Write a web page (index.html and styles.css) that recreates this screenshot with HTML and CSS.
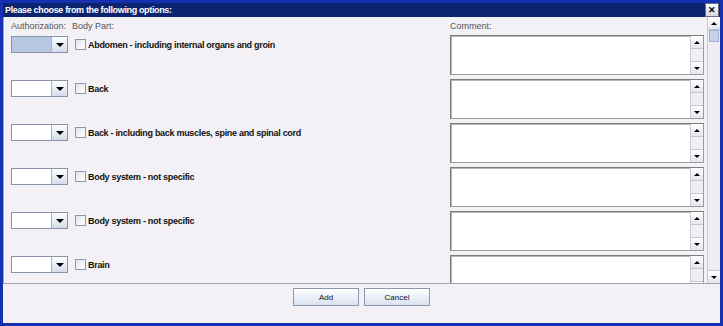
FILE: index.html
```html
<!DOCTYPE html>
<html lang="en">

<head>
    <meta charset="UTF-8">
    <title>Body Part Options</title>
    <link rel="stylesheet" href="styles.css">
</head>

<body>
    <div class="window">
        <div class="titlebar">
            <span class="title">Please choose from the following options:</span>
            <span class="close">&#10005;</span>
        </div>

        <div class="pane">
            <div class="viewport">
                <div class="header-row">
                    <span>Authorization:</span>
                    <span class="head-part">Body Part:</span>
                    <span>Comment:</span>
                </div>

                <div class="row">
                    <div class="combo selected"><span class="field"></span><span class="drop"></span></div>
                    <label class="part"><span class="check"></span>Abdomen - including internal organs and groin</label>
                    <div class="comment"><div class="text"></div><div class="tscroll"><span class="btn up"></span><span class="track"></span><span class="btn down"></span></div></div>
                </div>

                <div class="row">
                    <div class="combo"><span class="field"></span><span class="drop"></span></div>
                    <label class="part"><span class="check"></span>Back</label>
                    <div class="comment"><div class="text"></div><div class="tscroll"><span class="btn up"></span><span class="track"></span><span class="btn down"></span></div></div>
                </div>

                <div class="row">
                    <div class="combo"><span class="field"></span><span class="drop"></span></div>
                    <label class="part"><span class="check"></span>Back - including back muscles, spine and spinal cord</label>
                    <div class="comment"><div class="text"></div><div class="tscroll"><span class="btn up"></span><span class="track"></span><span class="btn down"></span></div></div>
                </div>

                <div class="row">
                    <div class="combo"><span class="field"></span><span class="drop"></span></div>
                    <label class="part"><span class="check"></span>Body system - not specific</label>
                    <div class="comment"><div class="text"></div><div class="tscroll"><span class="btn up"></span><span class="track"></span><span class="btn down"></span></div></div>
                </div>

                <div class="row">
                    <div class="combo"><span class="field"></span><span class="drop"></span></div>
                    <label class="part"><span class="check"></span>Body system - not specific</label>
                    <div class="comment"><div class="text"></div><div class="tscroll"><span class="btn up"></span><span class="track"></span><span class="btn down"></span></div></div>
                </div>

                <div class="row">
                    <div class="combo"><span class="field"></span><span class="drop"></span></div>
                    <label class="part"><span class="check"></span>Brain</label>
                    <div class="comment"><div class="text"></div><div class="tscroll"><span class="btn up"></span><span class="track"></span><span class="btn down"></span></div></div>
                </div>
            </div>

            <div class="vscroll">
                <span class="btn up"></span>
                <span class="thumb"></span>
                <span class="track"></span>
                <span class="btn down"></span>
            </div>
        </div>

        <div class="footer">
            <button class="action">Add</button>
            <button class="action">Cancel</button>
        </div>
    </div>
</body>

</html>
```

FILE: styles.css
```css
:root {
    --frame: #1530b0;
    --title-bg: #0b2470;
    --panel-bg: #f3f1f5;
    --line: #a4a4ac;
    --control-border: #8793a6;
    --text-primary: #111111;
    --text-secondary: #555555;
}

html, body {
    margin: 0;
    padding: 0;
}

body {
    font-family: 'Liberation Sans', Arial, sans-serif;
    font-size: 9px;
    color: var(--text-primary);
    background-color: var(--panel-bg);
}

.window {
    width: 723px;
    height: 326px;
    box-sizing: border-box;
    border: 3px solid var(--frame);
    background-color: var(--panel-bg);
    display: flex;
    flex-direction: column;
}

.titlebar {
    height: 14px;
    background-color: var(--title-bg);
    color: white;
    display: flex;
    align-items: center;
    justify-content: space-between;
    padding-left: 2px;
}

.title {
    font-weight: bold;
    font-size: 9px;
    letter-spacing: -0.35px;
}

.close {
    width: 12px;
    height: 12px;
    margin-right: 1px;
    background: linear-gradient(#ffffff, #d6d6dc);
    border: 1px solid #6b6f80;
    color: #000;
    font-size: 9px;
    font-weight: bold;
    line-height: 12px;
    text-align: center;
}

.pane {
    height: 266px;
    border-left: 1px solid var(--line);
    border-bottom: 1px solid var(--line);
    display: flex;
}

.viewport {
    flex: 1;
    overflow: hidden;
    padding: 0 3px 0 7px;
}

.header-row,
.row {
    display: grid;
    grid-template-columns: 57px 1fr 254px;
}

.header-row {
    height: 18px;
    align-items: center;
    color: var(--text-secondary);
}

.head-part {
    padding-left: 4px;
}

.row {
    height: 44px;
    align-items: start;
}

.combo {
    margin-top: 1px;
    height: 17px;
    box-sizing: border-box;
    border: 1px solid var(--control-border);
    display: flex;
    background-color: #fff;
}

.combo .field {
    flex: 1;
}

.combo.selected .field {
    background-color: #b8c8e2;
}

.drop {
    width: 15px;
    border-left: 1px solid #a9b4c4;
    background: linear-gradient(#ffffff, #d3dceb);
    display: flex;
    align-items: center;
    justify-content: center;
}

.drop::after,
.btn.down::after {
    content: "";
    border-left: 4px solid transparent;
    border-right: 4px solid transparent;
    border-top: 4px solid #000;
}

.part {
    margin-top: 1px;
    height: 17px;
    padding-left: 7px;
    display: flex;
    align-items: center;
    font-weight: bold;
    letter-spacing: -0.3px;
}

.check {
    width: 9px;
    height: 9px;
    margin-right: 2px;
    border: 1px solid #8d97aa;
    background: linear-gradient(135deg, #dfe5ef, #ffffff);
}

.comment {
    height: 40px;
    box-sizing: border-box;
    border: 1px solid #9c9c9c;
    border-top-color: #7d7d7d;
    border-left-color: #7d7d7d;
    box-shadow: inset 1px 1px 0 #b5b5b5;
    background-color: #fff;
    display: flex;
}

.comment .text {
    flex: 1;
}

.tscroll,
.vscroll {
    width: 13px;
    display: flex;
    flex-direction: column;
    background-color: #efeef3;
    border-left: 1px solid #c9c9d1;
    box-sizing: border-box;
}

.tscroll .track,
.vscroll .track {
    flex: 1;
}

.btn {
    height: 13px;
    flex-shrink: 0;
    background: linear-gradient(#ffffff, #e3e6ee);
    border-bottom: 1px solid #c4c6d0;
    box-sizing: border-box;
    display: flex;
    align-items: center;
    justify-content: center;
}

.btn.down {
    border-bottom: none;
    border-top: 1px solid #c4c6d0;
}

.btn.up::after {
    content: "";
    border-left: 3px solid transparent;
    border-right: 3px solid transparent;
    border-bottom: 3px solid #000;
}

.btn.down::after {
    border-left-width: 3px;
    border-right-width: 3px;
    border-top-width: 3px;
}

.thumb {
    height: 10px;
    margin: 0 1px;
    background-color: #c6d3ea;
    border: 1px solid #9eaed0;
}

.footer {
    flex: 1;
    display: flex;
    justify-content: center;
    align-items: flex-start;
    gap: 5px;
    padding-top: 4px;
}

.action {
    width: 66px;
    height: 18px;
    font-family: 'Liberation Sans', Arial, sans-serif;
    font-size: 8px;
    color: var(--text-primary);
    background: linear-gradient(#ffffff, #d9e2f0);
    border: 1px solid #8b98ad;
    padding: 0;
}
```
